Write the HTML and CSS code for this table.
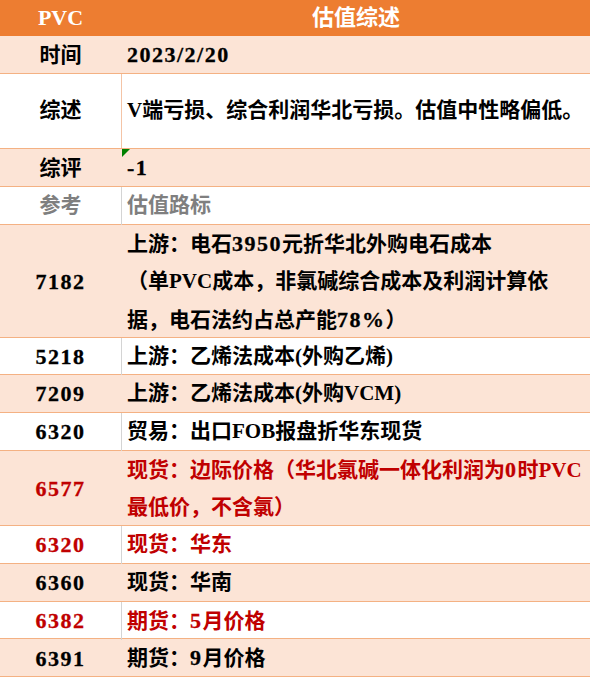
FILE: index.html
```html
<!DOCTYPE html>
<html lang="zh-CN">
<head>
<meta charset="utf-8">
<title>PVC 估值综述</title>
<link rel="stylesheet" href="styles.css">
</head>
<body>
<div class="sheet">
  <div class="row head">
    <div class="c1">PVC</div>
    <div class="c2 center">估值综述</div>
  </div>
  <div class="row peach u1">
    <div class="c1">时间</div>
    <div class="c2"><p class="t"><span class="n">2023/2/20</span></p></div>
  </div>
  <div class="row white u2 orange-line">
    <div class="c1">综述</div>
    <div class="c2"><p class="t">V端亏损、综合利润华北亏损。估值中性略偏低。</p></div>
  </div>
  <div class="row peach u1">
    <div class="c1">综评</div>
    <div class="c2 flag"><span class="tri"></span><p class="t"><span class="n">-1</span></p></div>
  </div>
  <div class="row white u1 grey">
    <div class="c1">参考</div>
    <div class="c2"><p class="t">估值路标</p></div>
  </div>
  <div class="row peach u3">
    <div class="c1"><span class="n">7182</span></div>
    <div class="c2"><p class="t">上游：电石<span class="n">3950</span>元折华北外购电石成本<br>（单PVC成本，非氯碱综合成本及利润计算依<br>据，电石法约占总产能<span class="n">78%</span>）</p></div>
  </div>
  <div class="row white u1">
    <div class="c1"><span class="n">5218</span></div>
    <div class="c2"><p class="t">上游：乙烯法成本(外购乙烯)</p></div>
  </div>
  <div class="row peach u1">
    <div class="c1"><span class="n">7209</span></div>
    <div class="c2"><p class="t">上游：乙烯法成本(外购VCM)</p></div>
  </div>
  <div class="row white u1">
    <div class="c1"><span class="n">6320</span></div>
    <div class="c2"><p class="t">贸易：出口FOB报盘折华东现货</p></div>
  </div>
  <div class="row peach u2 red">
    <div class="c1"><span class="n">6577</span></div>
    <div class="c2"><p class="t">现货：边际价格（华北氯碱一体化利润为<span class="n">0</span>时PVC<br>最低价，不含氯）</p></div>
  </div>
  <div class="row white u1 red">
    <div class="c1"><span class="n">6320</span></div>
    <div class="c2"><p class="t">现货：华东</p></div>
  </div>
  <div class="row peach u1">
    <div class="c1"><span class="n">6360</span></div>
    <div class="c2"><p class="t">现货：华南</p></div>
  </div>
  <div class="row white u1 red">
    <div class="c1"><span class="n">6382</span></div>
    <div class="c2"><p class="t">期货：<span class="n">5</span>月价格</p></div>
  </div>
  <div class="row peach u1">
    <div class="c1"><span class="n">6391</span></div>
    <div class="c2"><p class="t">期货：<span class="n">9</span>月价格</p></div>
  </div>
</div>
</body>
</html>
```

FILE: styles.css
```css
:root {
  --u: 37.706px;
}
html, body {
  margin: 0;
  padding: 0;
  background: #ffffff;
}
.sheet {
  width: 590px;
  font-family: "Liberation Serif", "Noto Sans CJK SC", serif;
  font-weight: 700;
  font-size: 21px;
  color: #000000;
  line-height: var(--u);
}
.row {
  display: grid;
  grid-template-columns: 122px 1fr;
  box-sizing: border-box;
  border-bottom: 1px solid #f4b183;
}
.head {
  height: 36px;
  line-height: 36px;
  background: #ed7d31;
  color: #ffffff;
  border-bottom: none;
  font-size: 22px;
}
.u1 { height: var(--u); }
.u2 { height: calc(var(--u) * 2); }
.u3 { height: calc(var(--u) * 3); }
.peach { background: #fce4d6; }
.white { background: #ffffff; }
.c1 {
  display: flex;
  align-items: center;
  justify-content: center;
  box-sizing: border-box;
  border-right: 1px solid transparent;
}
.white .c1 {
  border-right-color: #d4d4d4;
}
.white.orange-line .c1 {
  border-right-color: #f4c4a6;
}
.c2 {
  display: flex;
  align-items: center;
  padding-left: 5px;
  white-space: nowrap;
}
.t {
  margin: 0;
}
.c2.center {
  justify-content: center;
  padding-left: 0;
}
.head .c1, .head .c2 {
  display: block;
  text-align: center;
}
.flag {
  position: relative;
}
.tri {
  position: absolute;
  left: 0;
  top: 0;
  width: 0;
  height: 0;
  border-top: 8px solid #008000;
  border-right: 8px solid transparent;
}
.n {
  font-size: 22px;
  letter-spacing: 1.5px;
  -webkit-text-stroke: 0.3px currentColor;
}
.grey { color: #7f7f7f; }
.red { color: #c00000; }
```
